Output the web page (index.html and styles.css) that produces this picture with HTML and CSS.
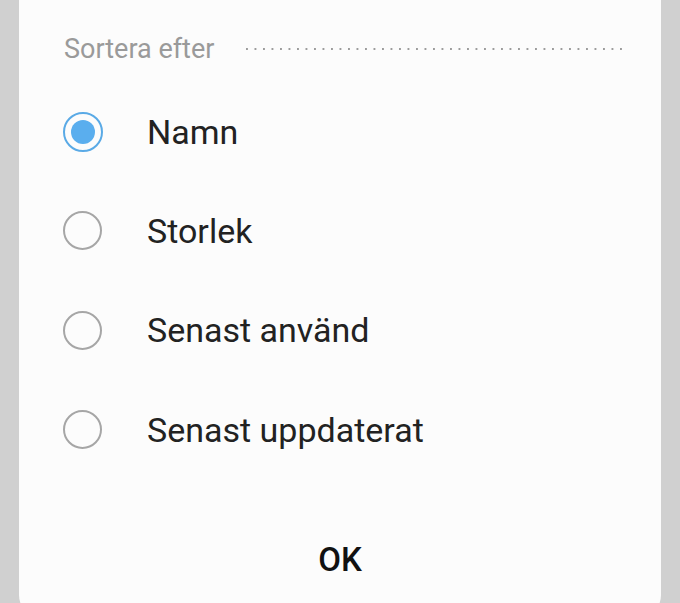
FILE: index.html
```html
<!DOCTYPE html>
<html lang="sv">
<head>
<meta charset="utf-8">
<title>Sortera efter</title>
<link rel="stylesheet" href="styles.css">
</head>
<body>
<div class="dialog">
  <div class="header">
    <span class="title">Sortera efter</span>
    <span class="dots"></span>
  </div>
  <ul class="options">
    <li class="option checked"><span class="radio"></span><span class="label">Namn</span></li>
    <li class="option"><span class="radio"></span><span class="label">Storlek</span></li>
    <li class="option"><span class="radio"></span><span class="label">Senast använd</span></li>
    <li class="option"><span class="radio"></span><span class="label">Senast uppdaterat</span></li>
  </ul>
  <div class="footer"><span class="ok">OK</span></div>
</div>
</body>
</html>
```
FILE: styles.css
```css
html, body {
  margin: 0;
  padding: 0;
  height: 100%;
  overflow: hidden;
}
body {
  background: #d0d0d0;
  font-family: Roboto, "Noto Sans", sans-serif;
  padding: 0 19px;
}
.dialog {
  background: #fcfcfc;
  height: 619px;
  border-radius: 0 0 24px 24px;
  padding: 30px 37px 0 44px;
  box-sizing: border-box;
}
.header {
  display: flex;
  align-items: center;
  height: 38px;
}
.title {
  font-size: 27px;
  color: #9a9a9a;
  line-height: 38px;
  padding-left: 1px;
}
.dots {
  flex: 1;
  height: 2px;
  margin-left: 32px;
  margin-top: -1px;
  background-image: linear-gradient(to right, #9c9c9c 2px, transparent 2px);
  background-size: 8.5px 2px;
  background-repeat: repeat-x;
}
.options {
  list-style: none;
  margin: 14px 0 0 0;
  padding: 0;
}
.option {
  display: flex;
  align-items: center;
  height: 99.3px;
}
.radio {
  width: 39px;
  height: 39px;
  box-sizing: border-box;
  border: 2px solid #a6a6a6;
  border-radius: 50%;
  display: flex;
  align-items: center;
  justify-content: center;
  flex: none;
}
.option.checked .radio {
  width: 40px;
  height: 40px;
  border-color: #5aaae6;
}
.option.checked .radio::after {
  content: "";
  width: 24px;
  height: 24px;
  border-radius: 50%;
  background: #5aaeee;
}
.label {
  margin-left: 45px;
  font-size: 34px;
  color: #222;
}
.option.checked .label {
  margin-left: 44px;
}
.footer {
  display: flex;
  justify-content: center;
  align-items: center;
  height: 80px;
  margin-right: -37px;
  margin-left: -44px;
  margin-top: 40px;
}
.ok {
  font-size: 33px;
  font-weight: 500;
  color: #111;
}
```
